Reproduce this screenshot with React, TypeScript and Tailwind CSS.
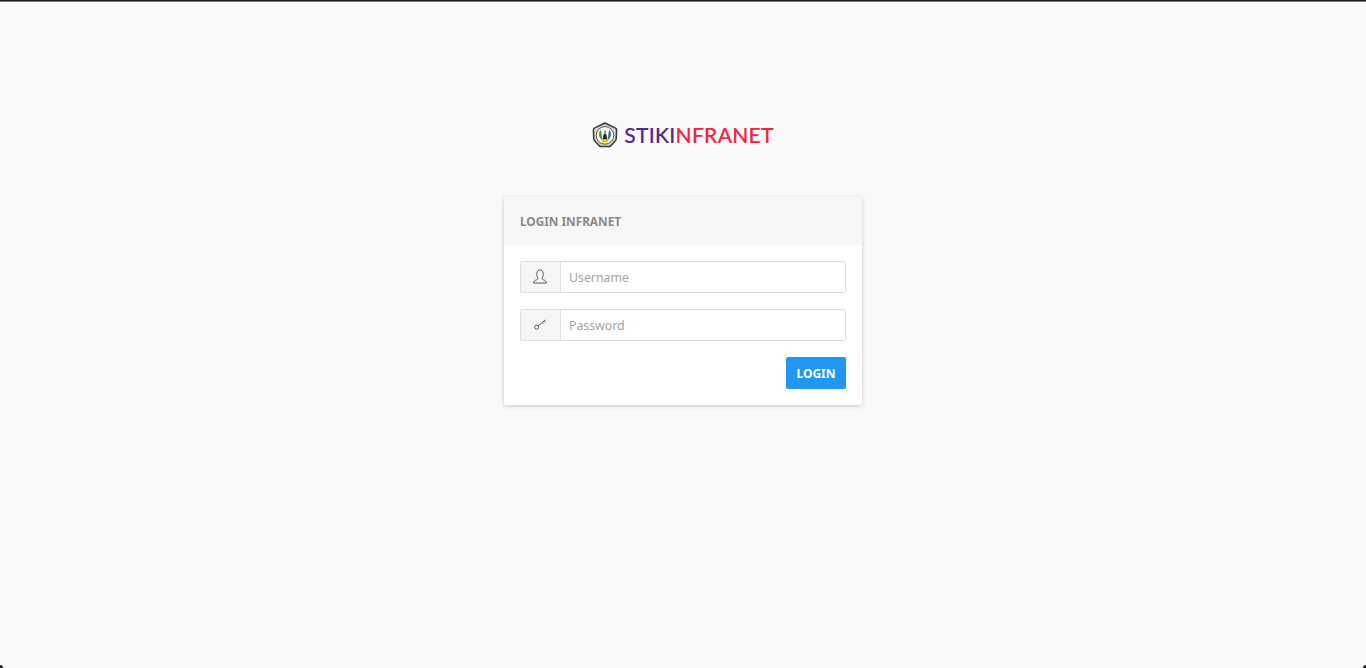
import React from 'react';

const Logo = () => (
  <svg width="26" height="26" viewBox="0 0 26 26" className="shrink-0">
    <path d="M13 1 L23.6 6.2 Q24.6 6.8 24.6 8 L24.2 17 Q24 18.4 23 19.2 L19 23.6 Q18 24.6 16.8 24.6 L9.2 24.6 Q8 24.6 7 23.6 L3 19.2 Q2 18.4 1.8 17 L1.4 8 Q1.4 6.8 2.4 6.2 Z" fill="#d9d6c8" stroke="#3a3a38" strokeWidth="1.5" strokeLinejoin="round" />
    <circle cx="13" cy="13.4" r="8.8" fill="#fbfbf2" stroke="#55554e" strokeWidth="1" />
    <path d="M8.6 7.8 C5.8 11.6 7 16.4 10.4 18 C9.6 15 10 11 8.6 7.8 Z" fill="#2f9a4c" />
    <path d="M17.4 7.8 C20.2 11.6 19 16.4 15.6 18 C16.4 15 16 11 17.4 7.8 Z" fill="#2c6fa8" />
    <path d="M13 8 L14.6 13.5 L15.4 17.6 L10.6 17.6 L11.4 13.5 Z" fill="#221d4a" />
    <path d="M9 17.6 H17 L15.6 20.6 H10.4 Z" fill="#f0bf17" />
    <circle cx="13" cy="11.2" r="1" fill="#f0bf17" />
  </svg>
);

const UserIcon = () => (
  <svg width="14" height="15" viewBox="0 0 14 15" fill="none" stroke="#44484b" strokeWidth="0.9" className="-ml-[2px] -mt-[2px]">
    <path d="M5 9.2 C3.8 7.8 3.6 6 3.8 4.2 C4 2 5.4 1 7 1 C8.6 1 10 2 10.2 4.2 C10.4 6 10.2 7.8 9 9.2 C8.9 10 9.4 10.4 10.4 10.8 C12 11.4 13.2 12 13.4 14 H0.6 C0.8 12 2 11.4 3.6 10.8 C4.6 10.4 5.1 10 5 9.2 Z" />
  </svg>
);

const KeyIcon = () => (
  <svg width="13" height="11" viewBox="0 0 13 11" fill="none" stroke="#44484b" strokeWidth="0.9" className="-ml-[1px] -mt-[1px]">
    <circle cx="2.6" cy="8.2" r="2" />
    <path d="M4.1 6.9 L11.4 0.9 M8.4 3.4 L9.7 4.7 M10.2 1.9 L11.7 3.2" />
  </svg>
);

const Field = ({ icon, placeholder, type }: { icon: React.ReactNode; placeholder: string; type: string }) => (
  <div className="flex h-8 rounded-[2px] border border-[#dddddd] bg-white">
    <div className="flex w-[40px] items-center justify-center border-r border-[#dddddd] bg-[#f5f5f5]">{icon}</div>
    <input
      type={type}
      placeholder={placeholder}
      className="min-w-0 flex-1 bg-transparent px-2 pt-[2px] font-['Noto_Sans',sans-serif] text-[12.3px] text-[#555] outline-none placeholder:text-[#a3a3a3]"
    />
  </div>
);

export default function App() {
  return (
    <div className="relative flex h-[668px] flex-col items-center overflow-hidden border-t border-[#1c1c1c] bg-[#f9f9f9] font-['Noto_Sans',sans-serif] shadow-[inset_0_1px_0_#777]">
      <div className="mt-[121px] flex h-[26px] items-center gap-[6px]">
        <Logo />
        <div className="-mt-[2px] font-['Lato',sans-serif] text-[21px] font-medium leading-none tracking-[0.3px] [-webkit-text-stroke:0.15px]">
          <span className="text-[#4f2a8c]">STIKI</span>
          <span className="text-[#f5233f]">NFRANET</span>
        </div>
      </div>

      <div className="mt-[49px] w-[358px] rounded-[2px] bg-white shadow-[0_1px_4px_rgba(0,0,0,0.2)]">
        <div className="flex h-12 items-center bg-[#f7f7f7] px-4 pt-[2px] text-[11.8px] font-bold text-[#8a8a8a]">
          LOGIN INFRANET
        </div>
        <div className="flex flex-col gap-4 p-4">
          <Field icon={<UserIcon />} placeholder="Username" type="text" />
          <Field icon={<KeyIcon />} placeholder="Password" type="password" />
          <div className="flex justify-end">
            <button className="h-8 w-[60px] rounded-[2px] bg-[#2196f3] pt-[2px] text-[12px] font-bold text-white">LOGIN</button>
          </div>
        </div>
      </div>

      <div className="absolute bottom-0 left-0 h-[3px] w-[3px] rounded-tr-[3px] bg-[#222]" />
      <div className="absolute bottom-0 right-0 h-[3px] w-[3px] rounded-tl-[3px] bg-[#222]" />
    </div>
  );
}
